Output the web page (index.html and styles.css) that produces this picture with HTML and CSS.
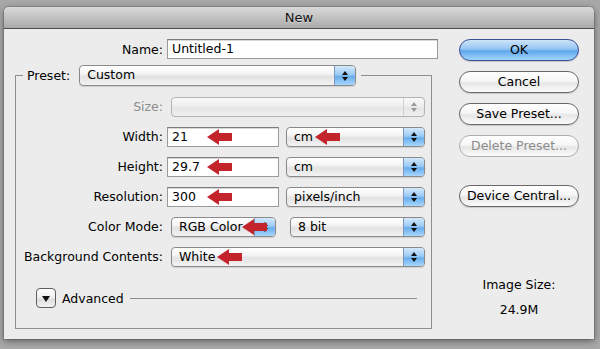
FILE: index.html
```html
<!DOCTYPE html>
<html>
<head>
<meta charset="utf-8">
<link rel="stylesheet" href="styles.css">
</head>
<body>
<div class="window">
  <div class="titlebar">New</div>
  <div class="content">
    <div class="form">
      <div class="name-row">
        <span class="lbl">Name:</span>
        <div class="text name">Untitled-1</div>
      </div>
      <fieldset class="preset">
        <legend>
          <span class="lbl">Preset:</span>
          <div class="popup p-custom"><span class="val">Custom</span><span class="step"><i class="up"></i><i class="dn"></i></span></div>
        </legend>
        <div class="grid">
          <span class="lbl dim">Size:</span>
          <div class="ctl"><div class="popup disabled p-full"><span class="val"></span><span class="step"><i class="up"></i><i class="dn"></i></span></div></div>

          <span class="lbl">Width:</span>
          <div class="ctl">
            <div class="field"><div class="text num">21</div><svg class="arrow a-num" width="25" height="16" viewBox="0 0 25 16"><path d="M0 8 L12 0 V4 H25 V12 H12 V16 Z"/></svg></div>
            <div class="field"><div class="popup p-unit"><span class="val">cm</span><span class="step"><i class="up"></i><i class="dn"></i></span></div><svg class="arrow a-cm" width="25" height="16" viewBox="0 0 25 16"><path d="M0 8 L12 0 V4 H25 V12 H12 V16 Z"/></svg></div>
          </div>

          <span class="lbl">Height:</span>
          <div class="ctl">
            <div class="field"><div class="text num">29.7</div><svg class="arrow a-num" width="25" height="16" viewBox="0 0 25 16"><path d="M0 8 L12 0 V4 H25 V12 H12 V16 Z"/></svg></div>
            <div class="popup p-unit"><span class="val">cm</span><span class="step"><i class="up"></i><i class="dn"></i></span></div>
          </div>

          <span class="lbl">Resolution:</span>
          <div class="ctl">
            <div class="field"><div class="text num">300</div><svg class="arrow a-num" width="25" height="16" viewBox="0 0 25 16"><path d="M0 8 L12 0 V4 H25 V12 H12 V16 Z"/></svg></div>
            <div class="popup p-unit"><span class="val">pixels/inch</span><span class="step"><i class="up"></i><i class="dn"></i></span></div>
          </div>

          <span class="lbl">Color Mode:</span>
          <div class="ctl">
            <div class="field"><div class="popup p-mode"><span class="val">RGB Color</span><span class="step"><i class="up"></i><i class="dn"></i></span></div><svg class="arrow a-rgb" width="25" height="16" viewBox="0 0 25 16"><path d="M0 8 L12 0 V4 H25 V12 H12 V16 Z"/></svg></div>
            <div class="popup p-bit"><span class="val">8 bit</span><span class="step"><i class="up"></i><i class="dn"></i></span></div>
          </div>

          <span class="lbl">Background Contents:</span>
          <div class="ctl">
            <div class="field"><div class="popup p-full"><span class="val">White</span><span class="step"><i class="up"></i><i class="dn"></i></span></div><svg class="arrow a-white" width="25" height="16" viewBox="0 0 25 16"><path d="M0 8 L12 0 V4 H25 V12 H12 V16 Z"/></svg></div>
          </div>
        </div>
        <div class="advanced">
          <span class="disclosure"><i></i></span>
          <span class="adv-text">Advanced</span>
          <span class="rule"></span>
        </div>
      </fieldset>
    </div>
    <div class="side">
      <div class="btn ok">OK</div>
      <div class="btn">Cancel</div>
      <div class="btn">Save Preset...</div>
      <div class="btn disabled">Delete Preset...</div>
      <div class="btn device">Device Central...</div>
      <div class="size-label">Image Size:</div>
      <div class="size-value">24.9M</div>
    </div>
  </div>
</div>
</body>
</html>
```
FILE: styles.css
```css
html, body {
  margin: 0;
  padding: 0;
}
body {
  width: 600px;
  height: 349px;
  overflow: hidden;
  background: #a8a8a8;
  font-family: "DejaVu Sans", "Liberation Sans", sans-serif;
  font-size: 12.5px;
  color: #000;
}
.window {
  margin: 7px 0 0 4px;
  width: 590px;
  height: 332px;
  background: #ececec;
  border-radius: 5px 5px 0 0;
  box-shadow: 0 2px 7px rgba(0,0,0,0.45), 0 0 0 1px rgba(0,0,0,0.12);
  overflow: hidden;
}
.titlebar {
  height: 21px;
  border-bottom: 1px solid #4f4f4f;
  background: linear-gradient(#d9d9d9, #c2c2c2 50%, #a9a9a9);
  text-align: center;
  line-height: 21px;
  font-size: 13px;
  color: #111;
  text-shadow: 0 1px 0 rgba(255,255,255,0.45);
}
.content {
  display: flex;
}
.form {
  width: 436px;
  padding-top: 10px;
}
.name-row {
  display: grid;
  grid-template-columns: 159px 271px;
  column-gap: 4px;
  align-items: center;
}
.lbl {
  text-align: right;
  white-space: nowrap;
}
.dim {
  color: #8d8d8d;
}
.text {
  box-sizing: border-box;
  height: 20px;
  border: 1px solid #9a9a9a;
  border-top-color: #7c7c7c;
  background: #fff;
  box-shadow: inset 0 1px 0 #d8d8d8;
  padding-left: 4px;
  line-height: 18px;
  white-space: nowrap;
}
.name {
  width: 271px;
}
.num {
  width: 112px;
}
.preset {
  margin: 6px 0 0 11px;
  width: 417px;
  box-sizing: border-box;
  border: 1px solid #8d8d8d;
  padding: 11px 0 20px 0;
  min-width: 0;
}
.preset legend {
  display: flex;
  align-items: center;
  margin-left: 7px;
  padding: 0 5px 0 4px;
}
.preset legend .lbl {
  margin-right: 9px;
}
.grid {
  display: grid;
  grid-template-columns: 147px 260px;
  column-gap: 4px;
  row-gap: 10px;
  align-items: center;
}
.grid > .lbl {
  line-height: 20px;
}
.ctl {
  display: flex;
  align-items: center;
  height: 20px;
}
.field {
  position: relative;
  display: flex;
}
.popup {
  box-sizing: border-box;
  display: flex;
  align-items: stretch;
  height: 20px;
  border: 1px solid #8a8a8a;
  border-radius: 4px;
  background: linear-gradient(#ffffff, #f4f4f4 40%, #e2e2e2 55%, #f3f3f3 100%);
  box-shadow: 0 1px 1px rgba(0,0,0,0.12);
  overflow: hidden;
  white-space: nowrap;
}
.popup .val {
  flex: 1;
  padding-left: 7px;
  line-height: 18px;
}
.popup .step {
  width: 20px;
  border-left: 1px solid #7b96bf;
  background: linear-gradient(#d3e8fc, #9ccbf5 45%, #68aeee 55%, #a8d6fd);
  display: flex;
  flex-direction: column;
  align-items: center;
  justify-content: center;
  gap: 2px;
}
.step i {
  display: block;
  width: 0;
  height: 0;
  border-left: 3px solid transparent;
  border-right: 3px solid transparent;
}
.step .up {
  border-bottom: 4px solid #111;
}
.step .dn {
  border-top: 4px solid #111;
}
.popup.disabled {
  border-color: #b3b3b3;
  background: linear-gradient(#f8f8f8, #efefef 45%, #e5e5e5 55%, #f0f0f0);
  box-shadow: none;
}
.popup.disabled .step {
  background: transparent;
  border-left: 1px solid #d0d0d0;
}
.popup.disabled .step .up { border-bottom-color: #9a9a9a; }
.popup.disabled .step .dn { border-top-color: #9a9a9a; }

.p-custom { width: 277px; height: 21px; }
.p-full { width: 254px; margin-left: 4px; }
.p-unit { width: 139px; margin-left: 7px; }
.p-mode { width: 105px; margin-left: 4px; }
.p-bit { width: 135px; margin-left: 14px; }

.arrow {
  position: absolute;
  top: 2px;
  fill: #c3232b;
}
.a-num { left: 40px; }
.a-cm { left: 36px; }
.a-rgb { left: 75px; }
.a-white { left: 50px; }

.advanced {
  display: flex;
  align-items: center;
  margin-top: 21px;
  height: 20px;
}
.disclosure {
  box-sizing: border-box;
  width: 20px;
  height: 20px;
  margin-left: 20px;
  border: 1px solid #5e5e5e;
  border-radius: 4px;
  background: linear-gradient(#ffffff, #eeeeee 50%, #dcdcdc 55%, #f2f2f2);
  display: flex;
  align-items: center;
  justify-content: center;
}
.disclosure i {
  display: block;
  width: 0;
  height: 0;
  border-left: 4px solid transparent;
  border-right: 4px solid transparent;
  border-top: 6px solid #111;
  margin-top: 1px;
}
.adv-text {
  margin-left: 6px;
}
.rule {
  flex: 1;
  height: 1px;
  background: #8d8d8d;
  margin: 0 14px 0 6px;
}
.side {
  width: 120px;
  margin-left: 19px;
  padding-top: 10px;
  display: flex;
  flex-direction: column;
  align-items: stretch;
}
.btn {
  box-sizing: border-box;
  height: 22px;
  margin-bottom: 10px;
  border: 1px solid #686868;
  border-radius: 11px;
  background: linear-gradient(#ffffff, #f6f6f6 45%, #e6e6e6 55%, #fbfbfb);
  box-shadow: 0 1px 1px rgba(0,0,0,0.15);
  text-align: center;
  line-height: 20px;
  white-space: nowrap;
}
.btn.ok {
  border-color: #3a4e98;
  background: linear-gradient(#cfe4f9, #95c6f3 45%, #5fa7ec 55%, #a2d6fd);
}
.btn.disabled {
  border-color: #adadad;
  color: #8c8c8c;
  box-shadow: none;
}
.btn.device {
  margin-top: 18px;
}
.size-label {
  margin-top: 60px;
  text-align: center;
  line-height: 15px;
}
.size-value {
  margin-top: 10px;
  text-align: center;
  line-height: 15px;
}
```
